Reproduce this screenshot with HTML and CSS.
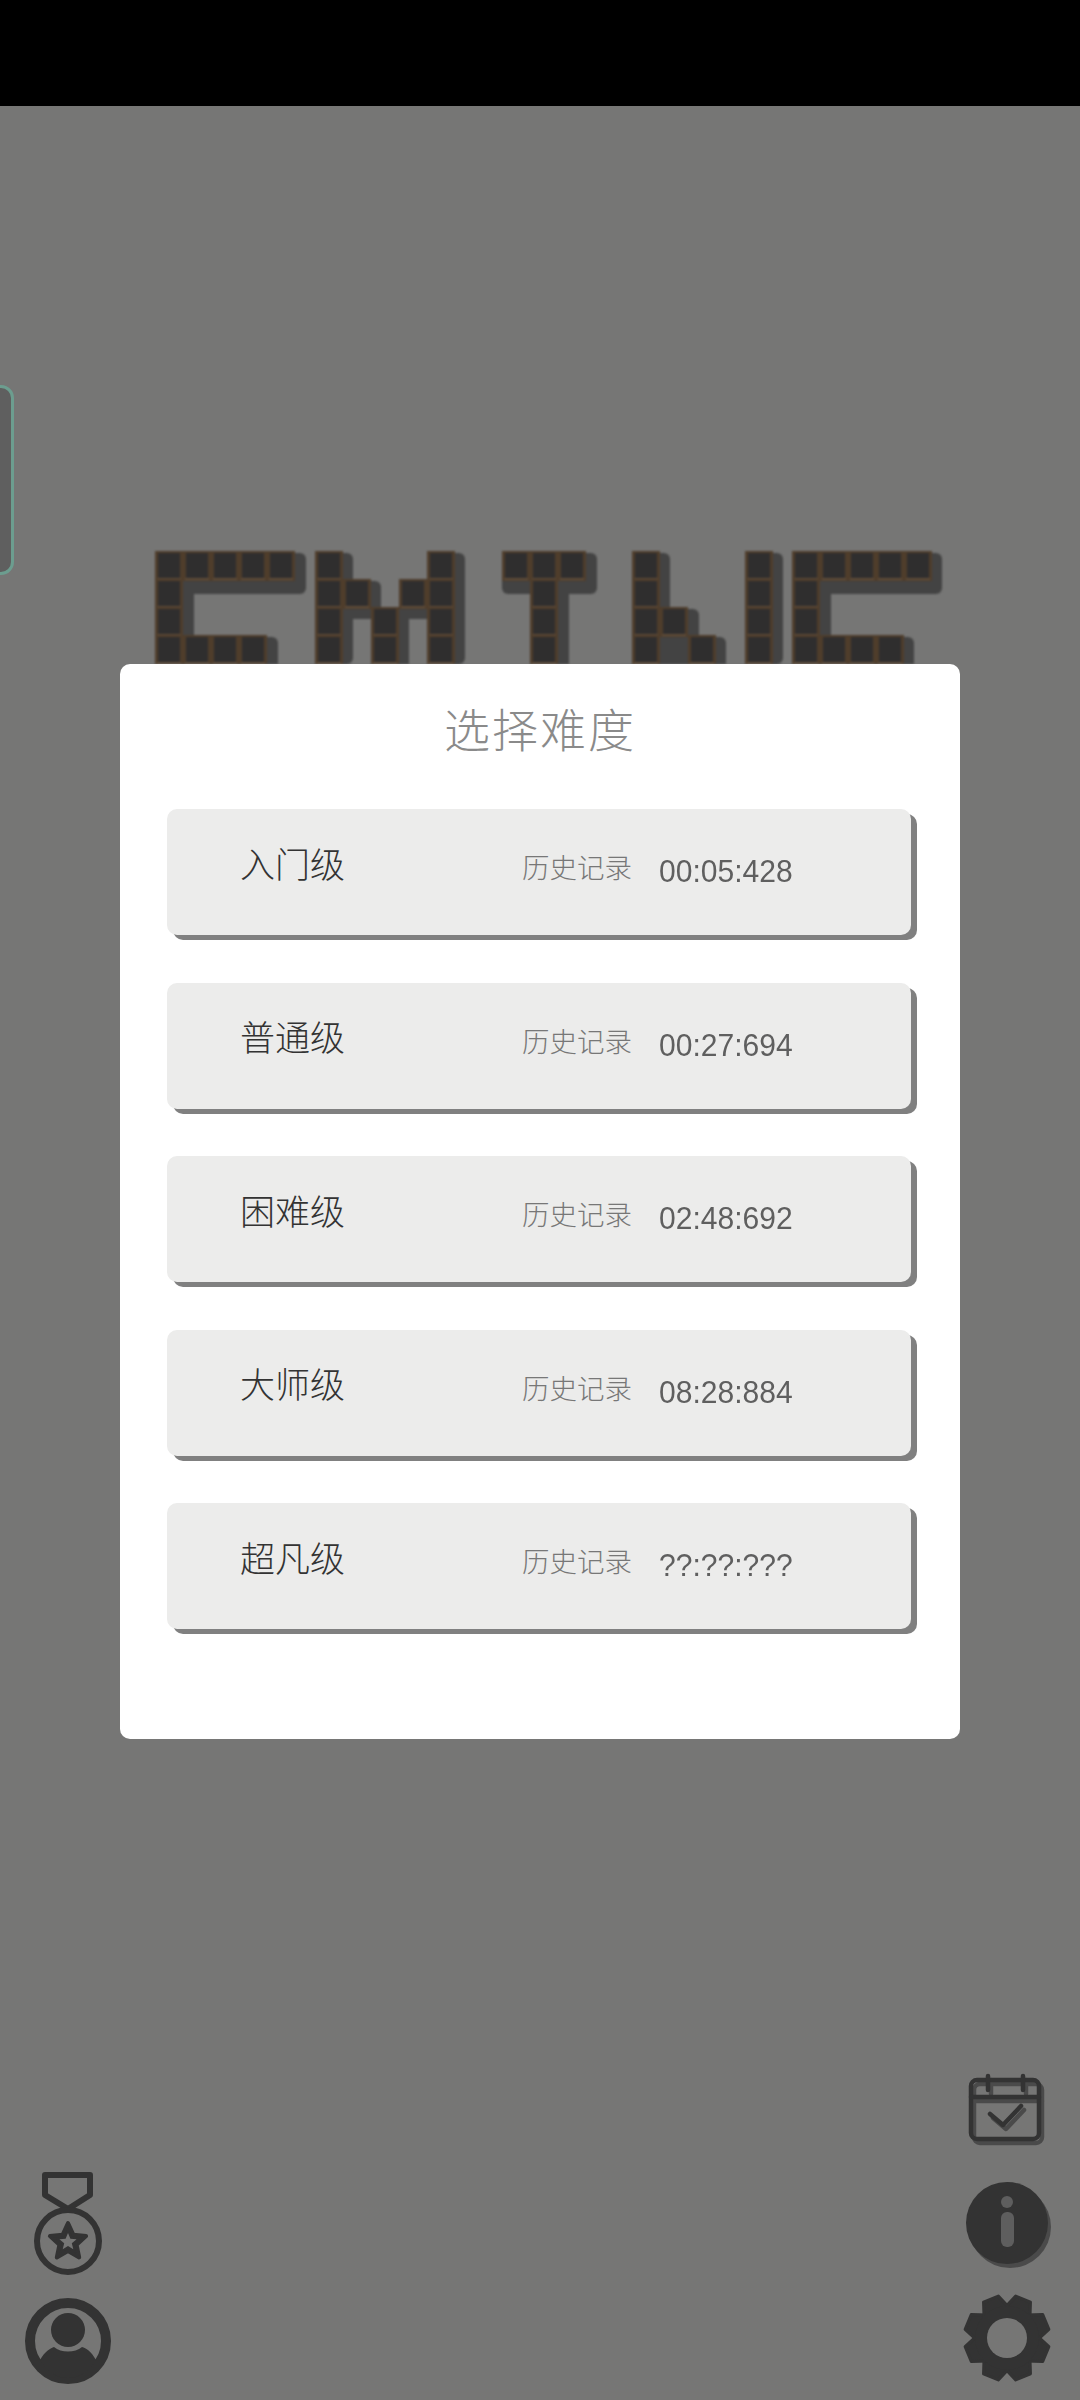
FILE: index.html
```html
<!DOCTYPE html>
<html lang="zh-CN">
<head>
  <meta charset="UTF-8" />
  <meta name="viewport" content="width=device-width, initial-scale=1.0"/>
  <title>选择难度</title>
  <link rel="stylesheet" href="styles.css">
</head>
<body>
  <div class="topbar"></div>

  <div class="stage">
    <div class="side-tab"></div>

    <svg class="logo" viewBox="150 545 800 119" width="800" height="119">
      <defs>
        <g id="cell">
          <rect class="cell-edge" x="0" y="-2" width="28" height="30"/>
          <rect class="cell-core" x="3" y="0" width="22" height="25"/>
          <rect class="cell-line" x="2" y="25" width="24" height="2"/>
        </g>
      </defs>
      <g class="logo-shadow">
        <rect x="155" y="553" width="151" height="41" rx="6"/>
        <rect x="155" y="553" width="39" height="111"/>
        <rect x="155" y="637" width="123" height="40" rx="6"/>
        <rect x="315" y="553" width="38" height="111" rx="6"/>
        <rect x="315" y="581" width="66" height="38" rx="6"/>
        <rect x="371" y="609" width="38" height="55"/>
        <rect x="399" y="581" width="66" height="38" rx="6"/>
        <rect x="427" y="553" width="38" height="111" rx="6"/>
        <rect x="502" y="553" width="95" height="41" rx="6"/>
        <rect x="530" y="553" width="39" height="111"/>
        <rect x="632" y="553" width="38" height="111" rx="6"/>
        <rect x="632" y="609" width="67" height="41" rx="6"/>
        <rect x="688" y="637" width="38" height="40" rx="6"/>
        <rect x="660" y="620" width="39" height="44"/>
        <rect x="745" y="553" width="38" height="111" rx="6"/>
        <rect x="792" y="553" width="150" height="41" rx="6"/>
        <rect x="792" y="553" width="39" height="111"/>
        <rect x="792" y="637" width="122" height="40" rx="6"/>
      </g>
      <g>
        <!-- C -->
        <use href="#cell" x="155" y="553"/><use href="#cell" x="183" y="553"/><use href="#cell" x="211" y="553"/><use href="#cell" x="239" y="553"/><use href="#cell" x="267" y="553"/>
        <use href="#cell" x="155" y="581"/><use href="#cell" x="155" y="609"/>
        <use href="#cell" x="155" y="637"/><use href="#cell" x="183" y="637"/><use href="#cell" x="211" y="637"/><use href="#cell" x="239" y="637"/>
        <!-- M -->
        <use href="#cell" x="315" y="553"/><use href="#cell" x="315" y="581"/><use href="#cell" x="315" y="609"/><use href="#cell" x="315" y="637"/>
        <use href="#cell" x="343" y="581"/><use href="#cell" x="371" y="609"/><use href="#cell" x="371" y="637"/><use href="#cell" x="399" y="581"/>
        <use href="#cell" x="427" y="553"/><use href="#cell" x="427" y="581"/><use href="#cell" x="427" y="609"/><use href="#cell" x="427" y="637"/>
        <!-- T -->
        <use href="#cell" x="502" y="553"/><use href="#cell" x="530" y="553"/><use href="#cell" x="558" y="553"/>
        <use href="#cell" x="530" y="581"/><use href="#cell" x="530" y="609"/><use href="#cell" x="530" y="637"/>
        <!-- N -->
        <use href="#cell" x="632" y="553"/><use href="#cell" x="632" y="581"/><use href="#cell" x="632" y="609"/><use href="#cell" x="632" y="637"/>
        <use href="#cell" x="660" y="609"/><use href="#cell" x="688" y="637"/>
        <use href="#cell" x="745" y="553"/><use href="#cell" x="745" y="581"/><use href="#cell" x="745" y="609"/><use href="#cell" x="745" y="637"/>
        <!-- C -->
        <use href="#cell" x="792" y="553"/><use href="#cell" x="820" y="553"/><use href="#cell" x="848" y="553"/><use href="#cell" x="876" y="553"/><use href="#cell" x="904" y="553"/>
        <use href="#cell" x="792" y="581"/><use href="#cell" x="792" y="609"/>
        <use href="#cell" x="792" y="637"/><use href="#cell" x="820" y="637"/><use href="#cell" x="848" y="637"/><use href="#cell" x="876" y="637"/>
      </g>
    </svg>

    <div class="corner-icons">
      <div class="icon-col icon-col-left">
        <svg class="icon" viewBox="0 0 90 112" width="90" height="112">
          <path class="line" d="M22 7H67V27L45 41L22 27Z"/>
          <circle class="line" cx="45" cy="73" r="31"/>
          <polygon class="solid" points="45,55 50.3,66.7 63.1,68.1 53.6,76.8 56.2,89.4 45,83 33.8,89.4 36.4,76.8 26.9,68.1 39.7,66.7"/>
          <polygon class="hole" points="45,65 47.4,70.8 53.6,71.2 48.8,75.2 50.3,81.3 45,78 39.7,81.3 41.2,75.2 36.4,71.2 42.6,70.8"/>
        </svg>
        <svg class="icon" viewBox="0 0 90 90" width="90" height="90">
          <circle class="ring" cx="45" cy="45" r="38"/>
          <circle class="fill" cx="45" cy="34" r="17"/>
          <path class="fill" d="M17 64C22 55 28 52 31 51C38 57 52 57 59 51C63 52 68 55 73 64C66 76 56 82 45 82C34 82 24 76 17 64Z"/>
        </svg>
      </div>

      <div class="icon-col">
        <svg class="icon icon-raised" viewBox="0 0 90 82" width="90" height="82">
          <rect class="line line-thin" x="9" y="10" width="68" height="59" rx="6"/>
          <path class="line line-thin" d="M9 27H77M26 6V20M61 6V20M28 44L41 55L59 36"/>
        </svg>
        <svg class="icon icon-raised" viewBox="0 0 90 90" width="90" height="90">
          <circle class="fill" cx="45" cy="45" r="41"/>
          <circle class="info-mark" cx="45" cy="24" r="6"/>
          <rect class="info-mark" x="39" y="34" width="13" height="35" rx="6"/>
        </svg>
        <svg class="icon" viewBox="0 0 90 92" width="90" height="92">
          <g transform="translate(45 44)">
            <defs><polygon id="tooth" class="tooth" points="-14,-26 -8,-42 8,-42 14,-26"/></defs>
            <use href="#tooth" transform="rotate(22.5)"/>
            <use href="#tooth" transform="rotate(67.5)"/>
            <use href="#tooth" transform="rotate(112.5)"/>
            <use href="#tooth" transform="rotate(157.5)"/>
            <use href="#tooth" transform="rotate(202.5)"/>
            <use href="#tooth" transform="rotate(247.5)"/>
            <use href="#tooth" transform="rotate(292.5)"/>
            <use href="#tooth" transform="rotate(337.5)"/>
            <circle class="fill" r="32"/>
            <circle class="hole" r="20"/>
          </g>
        </svg>
      </div>
    </div>

    <div class="modal">
      <h2 class="modal-title">选择难度</h2>
      <div class="level-list">
        <div class="level">
          <span class="level-name">入门级</span>
          <span class="level-label">历史记录</span>
          <span class="level-time">00:05:428</span>
        </div>
        <div class="level">
          <span class="level-name">普通级</span>
          <span class="level-label">历史记录</span>
          <span class="level-time">00:27:694</span>
        </div>
        <div class="level">
          <span class="level-name">困难级</span>
          <span class="level-label">历史记录</span>
          <span class="level-time">02:48:692</span>
        </div>
        <div class="level">
          <span class="level-name">大师级</span>
          <span class="level-label">历史记录</span>
          <span class="level-time">08:28:884</span>
        </div>
        <div class="level">
          <span class="level-name">超凡级</span>
          <span class="level-label">历史记录</span>
          <span class="level-time">??:??:???</span>
        </div>
      </div>
    </div>
  </div>
</body>
</html>
```

FILE: styles.css
```css
* {
  margin: 0;
  padding: 0;
  box-sizing: border-box;
}

body {
  width: 1080px;
  height: 2400px;
  display: flex;
  flex-direction: column;
  background: #767675;
  overflow: hidden;
  font-family: 'Noto Sans CJK SC', 'Liberation Sans', sans-serif;
}

.topbar {
  height: 106px;
  background: #000;
}

.stage {
  position: relative;
  flex: 1;
  display: flex;
  flex-direction: column;
}

.side-tab {
  position: absolute;
  left: -12px;
  top: 279px;
  width: 26px;
  height: 190px;
  background: #5f5f5f;
  border: 3px solid #6c9d8f;
  border-radius: 16px;
}

/* logo */
.logo {
  display: block;
  margin: 439px 0 0 150px;
  filter: blur(0.8px);
}

.logo-shadow {
  fill: #434343;
}

.cell-edge {
  fill: #4f3d2b;
}

.cell-core {
  fill: #2f2e2e;
}

.cell-line {
  fill: #5f4c39;
}

/* corner icons */
.corner-icons {
  margin-top: auto;
  display: flex;
  justify-content: space-between;
  align-items: flex-end;
  padding: 0 28px 14px 23px;
}

.icon-col {
  display: flex;
  flex-direction: column;
  gap: 26px;
}

.icon-col-left {
  gap: 16px;
}

.icon {
  display: block;
}

.icon-raised {
  filter: drop-shadow(3px 4px 0 #4a4a4a);
}

.line {
  fill: none;
  stroke: #333;
  stroke-width: 6;
  stroke-linecap: round;
  stroke-linejoin: round;
}

.line-thin {
  stroke-width: 4.5;
}

.ring {
  fill: none;
  stroke: #333;
  stroke-width: 10;
}

.fill {
  fill: #333;
}

.solid {
  fill: #333;
  stroke: #333;
  stroke-width: 4;
  stroke-linejoin: round;
}

.hole {
  fill: #767675;
}

.tooth {
  fill: #333;
  stroke: #333;
  stroke-width: 3;
  stroke-linejoin: round;
}

.info-mark {
  fill: #5e5e5e;
}

/* modal */
.modal {
  position: absolute;
  left: 120px;
  top: 558px;
  width: 840px;
  height: 1075px;
  padding: 29px 47px 0;
  background: #fff;
  border-radius: 10px;
}

.modal-title {
  height: 116px;
  font-size: 46px;
  font-weight: 300;
  line-height: 68px;
  letter-spacing: 2px;
  text-align: center;
  color: #8a8a8a;
}

.level-list {
  display: flex;
  flex-direction: column;
  gap: 47.6px;
}

.level {
  height: 126px;
  width: 744px;
  display: flex;
  align-items: center;
  padding-left: 73px;
  background: #ececeb;
  border-radius: 10px;
  box-shadow: 6px 5px 0 #808080;
}

.level-name {
  width: 282px;
  margin-bottom: 20px;
  font-size: 35px;
  font-weight: 300;
  color: #333;
}

.level-label {
  width: 137px;
  margin-bottom: 12px;
  font-size: 27.5px;
  font-weight: 300;
  color: #777;
}

.level-time {
  font-family: 'Liberation Sans', sans-serif;
  font-size: 31px;
  color: #5f5f5f;
  transform: scaleX(0.97);
  transform-origin: left center;
}
```
